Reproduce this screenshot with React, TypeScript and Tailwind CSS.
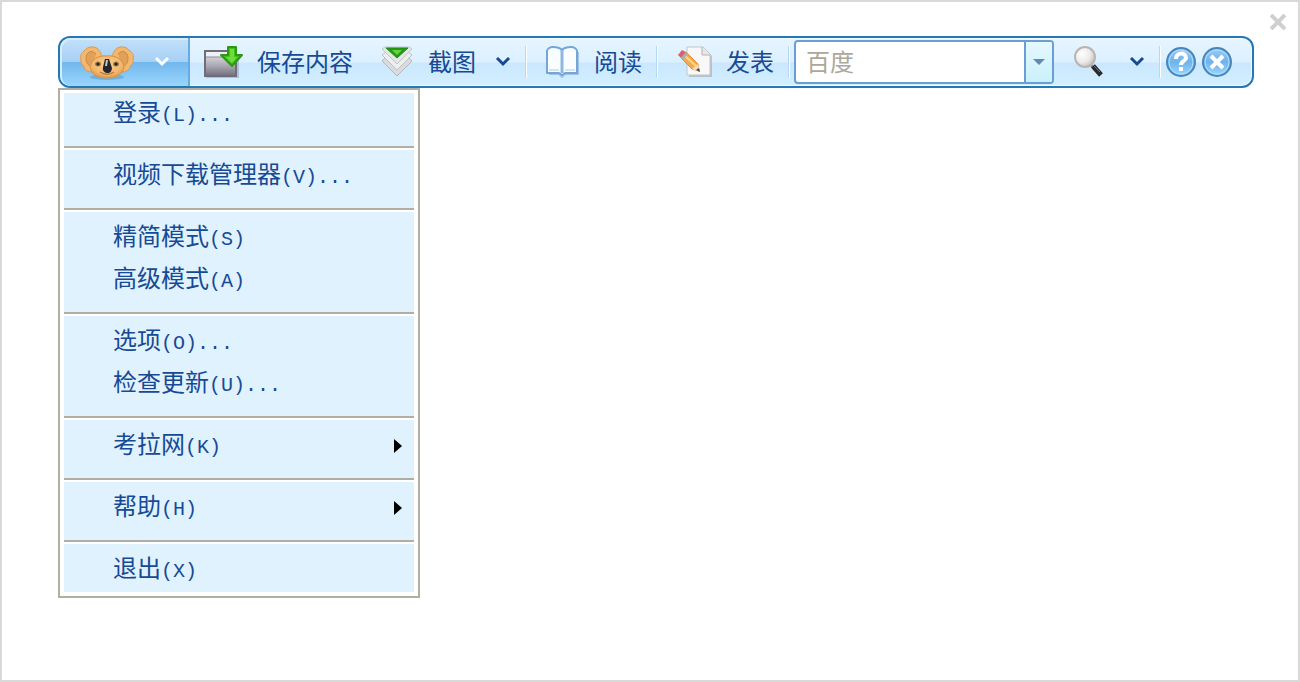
import React from "react";

type MenuItem = { label: string; accel: string; submenu?: boolean };

const menuGroups: MenuItem[][] = [
  [{ label: "登录", accel: "(L)..." }],
  [{ label: "视频下载管理器", accel: "(V)..." }],
  [
    { label: "精简模式", accel: "(S)" },
    { label: "高级模式", accel: "(A)" },
  ],
  [
    { label: "选项", accel: "(O)..." },
    { label: "检查更新", accel: "(U)..." },
  ],
  [{ label: "考拉网", accel: "(K)", submenu: true }],
  [{ label: "帮助", accel: "(H)", submenu: true }],
  [{ label: "退出", accel: "(X)" }],
];

const KoalaIcon = () => (
  <svg width="54" height="36" viewBox="0 0 54 36">
    <defs>
      <radialGradient id="fur" cx="50%" cy="40%" r="60%">
        <stop offset="0" stopColor="#fbd193" />
        <stop offset="0.7" stopColor="#f3b76d" />
        <stop offset="1" stopColor="#dd9a4c" />
      </radialGradient>
    </defs>
    <ellipse cx="27" cy="33" rx="17" ry="3" fill="#3f7fb4" opacity="0.35" />
    <path d="M22 14C21 7 17 2 11 3C8 3 6 5 4 7C1 9 0 12 1 15C0 18 2 21 4 22C4 26 8 28 13 28Z" fill="#f3b76d" stroke="#d99a50" />
    <path d="M32 14C33 7 37 2 43 3C46 3 48 5 50 7C53 9 54 12 53 15C54 18 52 21 50 22C50 26 46 28 41 28Z" fill="#f3b76d" stroke="#d99a50" />
    <path d="M16 10C12 5 6 8 6 14C6 20 9 22 12 22" fill="#e0a05a" stroke="#cd8b45" />
    <path d="M38 10C42 5 48 8 48 14C48 20 45 22 42 22" fill="#e0a05a" stroke="#cd8b45" />
    <path d="M27 12C35 11 43 15 44 23C43 31 35 34 27 34C19 34 11 31 10 23C11 15 19 11 27 12Z" fill="url(#fur)" stroke="#d5934a" />
    <ellipse cx="18" cy="20" rx="3" ry="2.5" fill="#9c7b48" />
    <ellipse cx="36" cy="20" rx="3" ry="2.5" fill="#9c7b48" />
    <circle cx="18" cy="20" r="1.6" fill="#2a2418" />
    <circle cx="36" cy="20" r="1.6" fill="#2a2418" />
    <path d="M20 28C24 31 30 31 34 28" fill="none" stroke="#bd7f3a" strokeWidth="1.5" />
    <path d="M25 15H29L32 24C32 27 30 29 28 29C25 29 22 27 23 23Z" fill="#25262c" />
    <path d="M26 16H28L27 22H25Z" fill="#c4c7d0" />
  </svg>
);

const SaveIcon = () => (
  <svg width="40" height="34" viewBox="0 0 40 34">
    <defs>
      <linearGradient id="folder" x1="0" y1="0" x2="0" y2="1">
        <stop offset="0" stopColor="#d2d2d8" />
        <stop offset="0.5" stopColor="#a9a7b1" />
        <stop offset="1" stopColor="#777484" />
      </linearGradient>
    </defs>
    <path d="M3 32H35V12" fill="none" stroke="#8fa9bd" strokeWidth="2" opacity="0.6" />
    <rect x="2" y="6" width="31" height="25" fill="#eef0f5" stroke="#6f6d78" strokeWidth="2" />
    <rect x="3" y="12" width="29" height="18" fill="url(#folder)" />
    <path d="M3 12H32" stroke="#8c8a94" strokeWidth="1" />
    <path d="M25 2H33V10H39L29 21L18 10H25Z" fill="#43bf20" stroke="#2c9a12" strokeWidth="2" strokeLinejoin="round" />
    <path d="M27 4H31V12H34L29 18L23 12H27Z" fill="#6fdc3c" />
  </svg>
);

const CaptureIcon = () => (
  <svg width="32" height="32" viewBox="0 0 32 32">
    <path d="M1 15L16 30L31 15L27 11L16 22L5 11Z" fill="#d9dcdf" stroke="#b5b8bb" />
    <path d="M1 9L16 24L31 9L27 6L16 17L5 6Z" fill="#eceeef" stroke="#bfc2c5" />
    <path d="M1 3L16 18L31 3L28 1H4Z" fill="#e4e7e7" stroke="#c0c5c6" />
    <path d="M5 2H27L16 12Z" fill="#219a17" stroke="#208d18" strokeLinejoin="round" />
    <path d="M11 4H21L16 9Z" fill="#6cd038" />
  </svg>
);

const BookIcon = () => (
  <svg width="34" height="32" viewBox="0 0 34 32">
    <path d="M4 28H14L17 31L20 28H33V6" fill="none" stroke="#8fb4d8" strokeWidth="2" opacity="0.7" />
    <path d="M17 4C14 1 11 1 8 1C5 1 2 3 2 5V27H14L17 29L20 27H32V5C32 3 29 1 26 1C23 1 20 1 17 4Z" fill="#fafdff" stroke="#74a5d9" strokeWidth="2" strokeLinejoin="round" />
    <path d="M17 4V27" stroke="#8db7e2" strokeWidth="3" />
    <path d="M4 24H14M20 24H30" stroke="#d3e4f5" strokeWidth="2" />
  </svg>
);

const WriteIcon = () => (
  <svg width="34" height="32" viewBox="0 0 34 32">
    <path d="M11 3H27L34 10V31H11Z" fill="#9b9a9b" opacity="0.5" />
    <path d="M9 1H25L32 8V29H9Z" fill="#f8f8f8" stroke="#c4c4c6" />
    <path d="M24 1V9H32" fill="#e6e6e7" stroke="#b4b4b7" strokeWidth="1" />
    <path d="M8 6L20 18L21 25L14 23L3 12Z" fill="#f6a94a" stroke="#dc8c3a" />
    <path d="M7 10L18 20" stroke="#ffd98c" strokeWidth="2" />
    <path d="M0 9L4 4L8 6L3 12Z" fill="#d8636c" />
    <path d="M8 6L10 8L5 14L3 12Z" fill="#a8adba" />
    <path d="M14 23L20 18L22 26Z" fill="#f6ddb6" />
    <path d="M18 24L21 22L22 26Z" fill="#45403d" />
  </svg>
);

const SearchIcon = () => (
  <svg width="30" height="32" viewBox="0 0 30 32">
    <defs>
      <radialGradient id="lens" cx="35%" cy="35%" r="70%">
        <stop offset="0" stopColor="#ffffff" />
        <stop offset="0.6" stopColor="#eceae8" />
        <stop offset="1" stopColor="#c2bfbd" />
      </radialGradient>
    </defs>
    <path d="M16 18L20 22" stroke="#858382" strokeWidth="3" />
    <path d="M19 20L27 29" stroke="#292a2b" strokeWidth="5" />
    <path d="M20 20L26 26" stroke="#77797a" strokeWidth="1" />
    <circle cx="11" cy="11" r="10" fill="url(#lens)" stroke="#b9b5b3" strokeWidth="2" />
  </svg>
);

const Chevron = ({ color }: { color: string }) => (
  <svg width="16" height="12" viewBox="0 0 16 12">
    <path d="M2 2L8 8L14 2" fill="none" stroke={color} strokeWidth="3" />
  </svg>
);

const RoundIcon = ({ children }: { children: React.ReactNode }) => (
  <svg width="32" height="32" viewBox="0 0 32 32">
    <defs>
      <linearGradient id="orb" x1="0" y1="0" x2="0" y2="1">
        <stop offset="0" stopColor="#9ccbf4" />
        <stop offset="0.5" stopColor="#6db3ef" />
        <stop offset="1" stopColor="#9ad8fb" />
      </linearGradient>
    </defs>
    <circle cx="16" cy="16" r="14" fill="url(#orb)" stroke="#4586bd" strokeWidth="2" />
    <circle cx="16" cy="16" r="12" fill="none" stroke="#b9dcf8" strokeWidth="1" />
    {children}
  </svg>
);

const Separator = () => (
  <span className="h-8 w-[2px] shrink-0 border-r border-white bg-[#b5d9f3]" />
);

const Toolbar = () => (
  <div className="flex h-[52px] items-center overflow-hidden rounded-xl border-2 border-[#2478b8] bg-[linear-gradient(#e6f5ff_0%,#dcf0ff_50%,#cae7fe_53%,#d3efff_100%)] pr-[19px] text-2xl whitespace-nowrap text-[#174a94] shadow-[inset_0_0_0_1px_#f3fbff]">
    <button
      aria-label="考拉"
      className="flex h-full w-[130px] shrink-0 items-center gap-5 rounded-l-[10px] border-r-2 border-[#65ace2] bg-[linear-gradient(#c3e1fa_0%,#a6d0f5_49%,#72b7ed_51%,#99d6fb_100%)] pl-5 shadow-[inset_1px_1px_0_1px_#d5edfd]"
    >
      <KoalaIcon />
      <Chevron color="#ffffff" />
    </button>
    <button className="ml-[13px] flex shrink-0 items-center gap-[14px]">
      <SaveIcon />
      <span className="pb-[3px]">保存内容</span>
    </button>
    <button className="ml-7 flex shrink-0 items-center gap-[15px]">
      <CaptureIcon />
      <span className="pb-[3px]">截图</span>
    </button>
    <button aria-label="截图选项" className="mr-[14px] ml-[19px] shrink-0">
      <Chevron color="#174a94" />
    </button>
    <Separator />
    <button className="mr-[14px] ml-[18px] flex shrink-0 items-center gap-[15px]">
      <BookIcon />
      <span className="pb-[3px]">阅读</span>
    </button>
    <Separator />
    <button className="mr-[14px] ml-5 flex shrink-0 items-center gap-[14px]">
      <WriteIcon />
      <span className="pb-[3px]">发表</span>
    </button>
    <Separator />
    <div className="ml-1 flex h-11 min-w-0 flex-1 overflow-hidden rounded-[4px] border-2 border-[#6a9fd6] bg-white">
      <input
        type="text"
        aria-label="搜索"
        placeholder="百度"
        className="min-w-0 flex-1 px-[10px] pb-[3px] text-2xl outline-none placeholder:text-[#aca899]"
      />
      <button
        aria-label="选择搜索引擎"
        className="flex w-7 items-center justify-center border-l-2 border-[#6a9fd6] bg-[linear-gradient(#e6f7ff,#c9f1fb)]"
      >
        <svg width="12" height="6" viewBox="0 0 12 6">
          <path d="M0 0H12L6 6Z" fill="#6388b3" />
        </svg>
      </button>
    </div>
    <button aria-label="搜索" className="ml-5 shrink-0">
      <SearchIcon />
    </button>
    <button aria-label="搜索选项" className="mr-[14px] ml-[25px] shrink-0">
      <Chevron color="#174a94" />
    </button>
    <Separator />
    <div className="ml-1 flex shrink-0 gap-1">
      <button aria-label="帮助">
        <RoundIcon>
          <path d="M11 13C11 6 21 6 21 12C21 15 16 15 16 19" fill="none" stroke="#fff" strokeWidth="4" />
          <rect x="14" y="21" width="4" height="4" fill="#fff" />
        </RoundIcon>
      </button>
      <button aria-label="关闭工具栏">
        <RoundIcon>
          <path d="M10 10L22 22M22 10L10 22" stroke="#fff" strokeWidth="4" />
        </RoundIcon>
      </button>
    </div>
  </div>
);

const Menu = () => (
  <div className="w-[362px] border-2 border-[#b3aea2] bg-white px-1 pt-[3px] pb-1">
    {menuGroups.map((group, i) => (
      <div
        key={group[0].label}
        className={i === 0 ? "" : "border-t-2 border-[#b3aea2] pt-[2px]"}
      >
        <div
          className={
            i === 0
              ? "bg-[#e0f2fe] pb-[11px]"
              : i === menuGroups.length - 1
                ? "bg-[#e0f2fe] pt-[5px] pb-px"
                : "bg-[#e0f2fe] pt-[5px] pb-[11px]"
          }
        >
          {group.map((item) => (
            <button
              key={item.label}
              className="flex h-[42px] w-full items-center pr-3 pl-[49px] text-2xl text-[#174a94]"
            >
              <span className="pb-[3px]">
                {item.label}
                <span className="font-['Liberation_Mono',monospace] text-xl">
                  {item.accel}
                </span>
              </span>
              {item.submenu && (
                <svg width="8" height="14" viewBox="0 0 8 14" className="ml-auto">
                  <path d="M0 0L8 7L0 14Z" fill="#000" />
                </svg>
              )}
            </button>
          ))}
        </div>
      </div>
    ))}
  </div>
);

const App = () => {
  return (
    <div className="relative min-h-screen border-2 border-[#d9d9d9] bg-white pt-[34px] pr-11 pl-14 font-['Noto_Sans_CJK_SC',sans-serif]">
      <button aria-label="关闭" className="absolute top-3 right-3">
        <svg width="16" height="16" viewBox="0 0 16 16">
          <path d="M1 1L15 15M15 1L1 15" stroke="#cfcfcf" strokeWidth="4" />
        </svg>
      </button>
      <Toolbar />
      <Menu />
    </div>
  );
};

export default App;
